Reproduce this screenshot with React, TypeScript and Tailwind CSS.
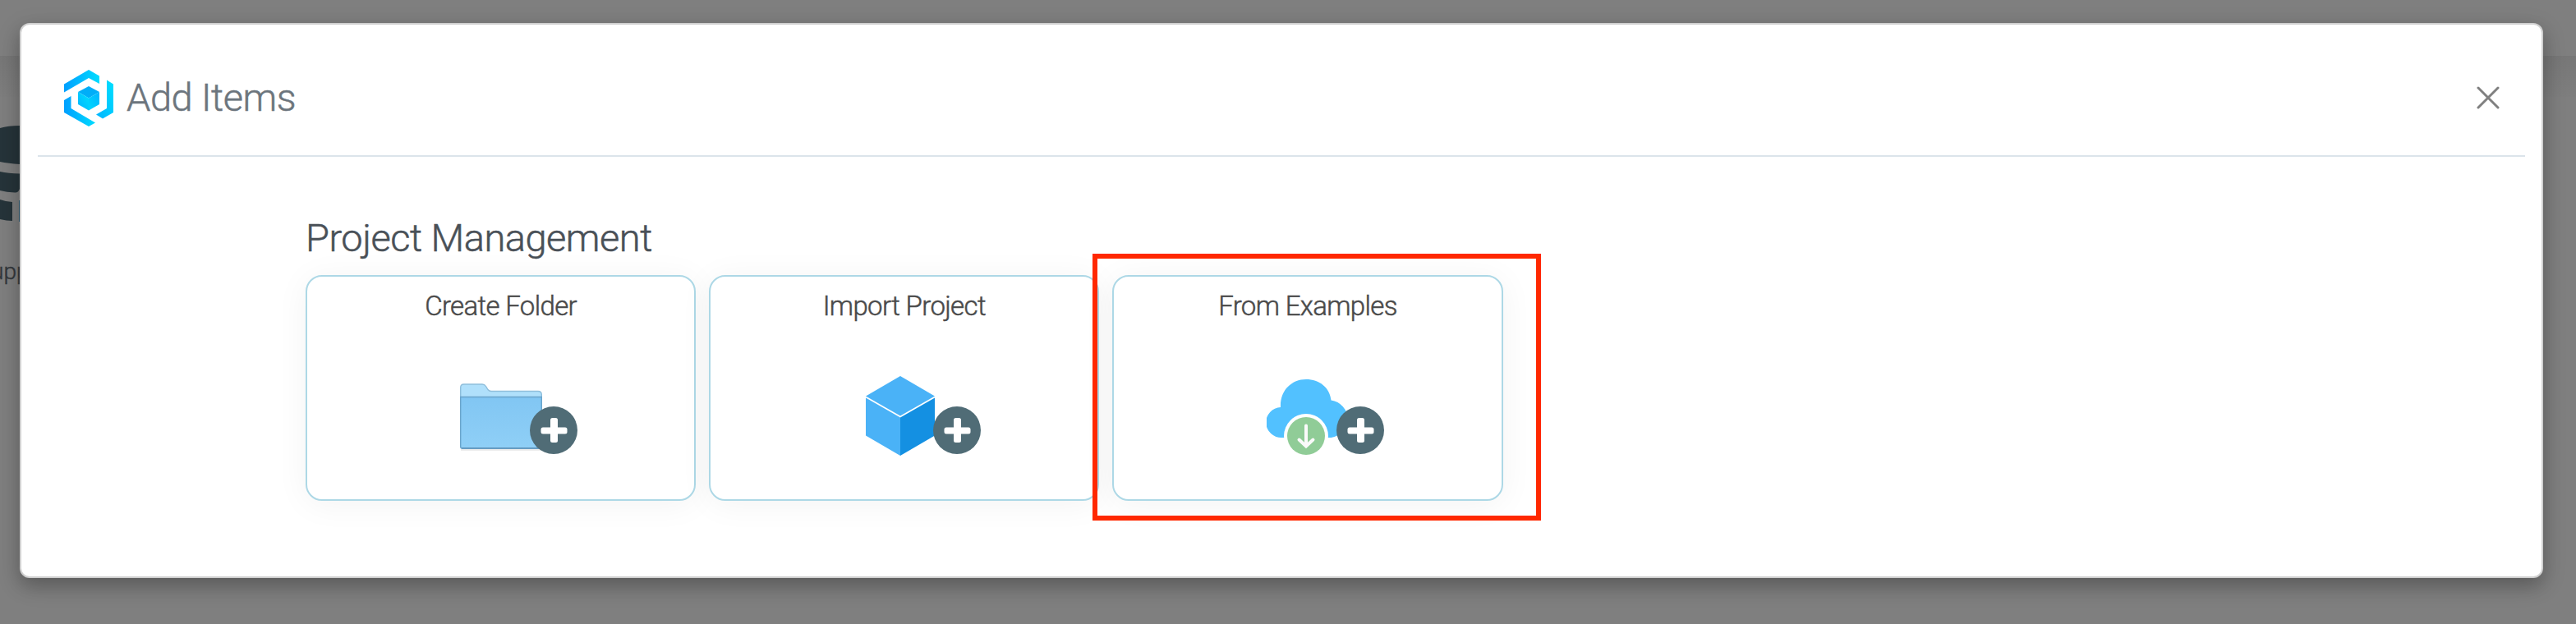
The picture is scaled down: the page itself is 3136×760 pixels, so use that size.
import React from 'react';

interface CardItem {
  id: string;
  title: string;
  icon: React.ReactNode;
}

function Logo() {
  return (
    <svg width="60" height="69" viewBox="0 0 60 69" className="shrink-0">
      <defs>
        <linearGradient id="logo-top" x1="0" y1="0" x2="1" y2="0">
          <stop offset="0" stopColor="#009fff" />
          <stop offset="1" stopColor="#00dcff" />
        </linearGradient>
        <linearGradient id="logo-side" x1="0" y1="1" x2="1" y2="0">
          <stop offset="0" stopColor="#00b4ff" />
          <stop offset="1" stopColor="#00e0ff" />
        </linearGradient>
        <linearGradient id="logo-cube" x1="0" y1="1" x2="1" y2="0">
          <stop offset="0" stopColor="#00d8ff" />
          <stop offset="1" stopColor="#00b4ff" />
        </linearGradient>
      </defs>
      <path d="M0 17.500 L30 0 L43 7.500 V17 L30 10 L0 27.500 Z" fill="url(#logo-top)" />
      <path d="M0 37 L8.500 32 V47 L38 64.500 L30 69 L0 52 Z" fill="url(#logo-top)" />
      <path d="M52 12.500 L60 17.500 V52 L47 59.500 L39 54.500 L52 47 Z" fill="url(#logo-side)" />
      <path d="M17 27 L30 20 L43 27 L30 34.500 Z" fill="#00aef8" />
      <path d="M17 27 L30 34.500 V49.500 L17 42 Z" fill="url(#logo-side)" />
      <path d="M43 27 L30 34.500 V49.500 L43 42 Z" fill="url(#logo-cube)" />
    </svg>
  );
}

function FolderIcon() {
  return (
    <svg width="100" height="84" viewBox="0 0 100 84">
      <defs>
        <linearGradient id="folder-front" x1="0" y1="0" x2="0" y2="1">
          <stop offset="0" stopColor="#81c6f3" />
          <stop offset="1" stopColor="#8fcff6" />
        </linearGradient>
      </defs>
      <path d="M1 81 H99" stroke="#ececec" strokeWidth="2" />
      <path d="M0.700 18 V5 Q0.700 1 4.700 1 H27 Q30 1 31.500 3.500 L34 7.500 Q35.500 9.500 38 9.500 H95 Q99.300 9.500 99.300 13.500 V18 Z" fill="#b0e0fb" stroke="#8fbedb" strokeWidth="1.400" />
      <path d="M0.700 16.500 H99.300 V77 Q99.300 79.300 97 79.300 H3 Q0.700 79.300 0.700 77 Z" fill="url(#folder-front)" stroke="#6aa5cc" strokeWidth="1.400" />
      <path d="M2 78.800 H98" stroke="#6498bd" strokeWidth="1.600" />
    </svg>
  );
}

function CubeIcon() {
  return (
    <svg width="84" height="97" viewBox="0 0 84 97">
      <path d="M42 0 L84 24.500 L42 48.500 L0 24.500 Z" fill="#4ab2f7" />
      <path d="M0 26.500 L42 50.500 V97 L0 72.500 Z" fill="#4ab2f7" />
      <path d="M84 26.500 L42 50.500 V97 L84 72.500 Z" fill="#1490e2" />
    </svg>
  );
}

function CloudIcon() {
  return (
    <svg width="102" height="92" viewBox="0 0 102 92">
      <path d="M17 34 C16 14 30 0 48 0 C64 0 77 10 78.500 25.500 A23.500 23 0 0 1 78.500 71 H18.500 A18.500 18.500 0 0 1 17 34 Z" fill="#52c1ff" />
      <circle cx="48" cy="69" r="27" fill="#fff" />
      <circle cx="48" cy="69" r="23" fill="#90cc97" />
      <path d="M48 56.500 V81 M39.500 73.500 L48 81.500 L56.500 73.500" fill="none" stroke="#fafafa" strokeWidth="4" strokeLinecap="round" />
    </svg>
  );
}

function PlusBadge() {
  return (
    <svg width="58" height="58" viewBox="0 0 58 58" className="absolute left-[271px] top-[158px]">
      <circle cx="29" cy="29" r="29" fill="#506c76" />
      <rect x="25" y="14" width="9" height="30" rx="2.500" fill="#fff" />
      <rect x="13.500" y="25.500" width="32" height="8" rx="2.500" fill="#fff" />
    </svg>
  );
}

const cards: CardItem[] = [
  { id: 'folder', title: 'Create Folder', icon: <div className="mt-[130px] ml-[186px]"><FolderIcon /></div> },
  { id: 'import', title: 'Import Project', icon: <div className="mt-[121px] ml-[189px]"><CubeIcon /></div> },
  { id: 'examples', title: 'From Examples', icon: <div className="mt-[125px] ml-[186px]"><CloudIcon /></div> },
];

function Card({ item }: { item: CardItem }) {
  return (
    <div className="relative w-[475.2px] h-[275px] shrink-0 rounded-[20px] border-2 border-[#add8e6] bg-white shadow-[0_4px_40px_rgba(0,0,0,0.05)]">
      <div className="absolute inset-x-0 top-[16px] text-center text-[33px] leading-10 tracking-[-0.65px] text-[#4a4a4a] [-webkit-text-stroke:0.5px_#4a4a4a]">{item.title}</div>
      <div className="flex">{item.icon}</div>
      <PlusBadge />
    </div>
  );
}

// Dimmed page that stays visible around the dialog
function Backdrop() {
  return (
    <div className="absolute inset-0 bg-[#7f7f7f]">
      <div className="h-[68px]" />
      <div className="h-[50px] bg-linear-to-b from-[#777777] to-[#7e7e7e]" />
      <svg width="24" height="120" viewBox="0 0 24 120" className="absolute left-0 top-[152px]">
        <path d="M0 4 Q10 1 24 1 V48 Q10 47 0 45 Z" fill="#26343a" />
        <path d="M0 57 Q10 59 24 59.500 V78 Q22 83 18 82.500 Q8 82 0 80 Z" fill="#26343a" />
        <path d="M0 91 Q8 94 15 94 V117 Q8 117 0 115 Z" fill="#26343a" />
        <path d="M23 92 H24 V118 H23 Z" fill="#2b536b" />
      </svg>
      <div className="absolute left-[-11px] top-[313px] whitespace-nowrap text-[28px] leading-9 text-[#33383c] [-webkit-text-stroke:0.5px_#33383c]">upp</div>
    </div>
  );
}

export default function App() {
  return (
    <div className="relative w-[3136px] h-[760px] overflow-hidden pt-7 pl-6 font-[Roboto,sans-serif] font-light">
      <Backdrop />
      <div className="relative w-[3072px] h-[676px] rounded-xl border-2 border-[#d0d0d0] bg-white px-5 shadow-[0_10px_22px_rgba(0,0,0,0.18),0_8px_30px_rgba(0,0,0,0.15)]">
        <div className="flex h-[161px] items-center justify-between border-b-2 border-[#dce4eb] pl-8 pr-[31px] pt-[19px]">
          <div className="flex items-center gap-4">
            <Logo />
            <h4 className="text-[47px] leading-[58px] tracking-[-0.5px] text-[#6c757d] [-webkit-text-stroke:0.5px_#6c757d]">Add Items</h4>
          </div>
          <svg width="28" height="28" viewBox="0 0 28 28" className="mb-px">
            <path d="M2 2 L26 26 M26 2 L2 26" stroke="#808080" strokeWidth="3" strokeLinecap="round" />
          </svg>
        </div>

        <div className="pl-[326px] pt-[70px]">
          <h4 className="h-[74px] text-[47px] leading-[58px] tracking-[-0.5px] text-[#495057] [-webkit-text-stroke:0.5px_#495057]">Project Management</h4>
          <div className="flex gap-4">
            {cards.map(item => (
              <Card key={item.id} item={item} />
            ))}
          </div>
        </div>
      </div>

      {/* Highlight around the examples card */}
      <div className="absolute left-[1330px] top-[309px] w-[546px] h-[325px] border-[6px] border-[#ff2800]" />
    </div>
  );
}
